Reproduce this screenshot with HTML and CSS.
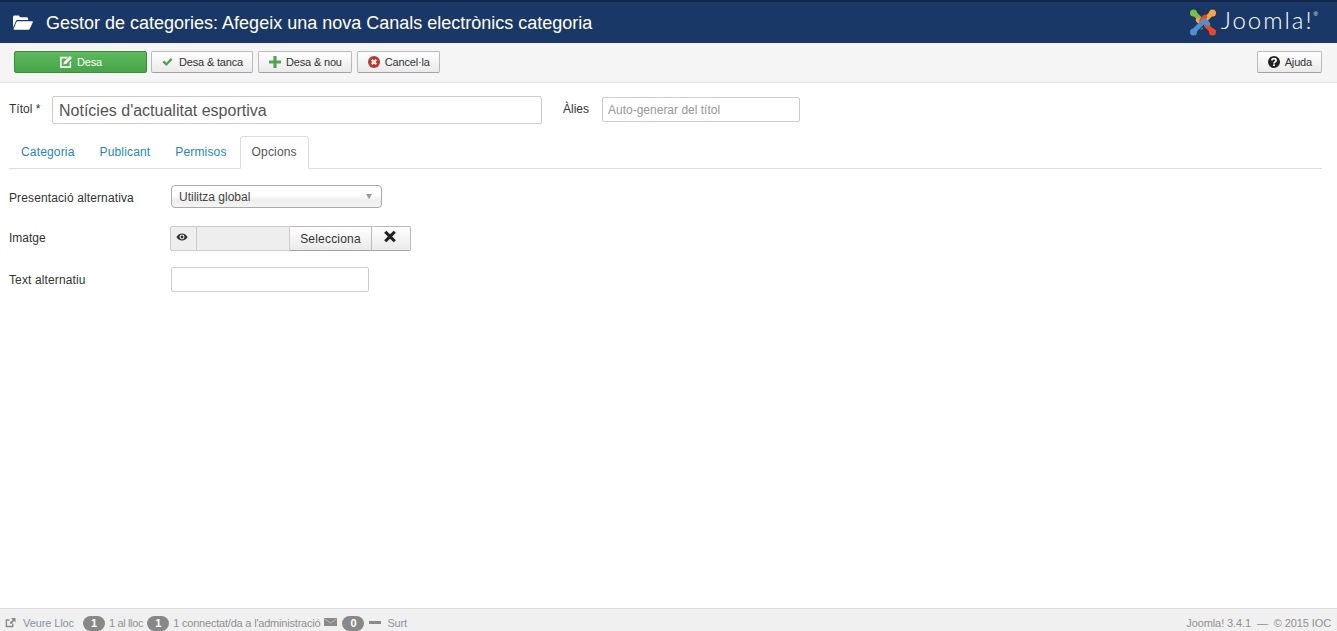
FILE: index.html
```html
<!DOCTYPE html>
<html lang="ca">
<head>
<meta charset="utf-8">
<title>Gestor de categories</title>
<link rel="stylesheet" href="styles.css">
</head>
<body>
<header class="header">
  <svg class="folder" viewBox="0 0 20 16" width="20" height="16"><path fill="#fff" d="M0 2.200C0 1.200.8.600 1.600.600h3.600c.9 0 1.500.6 1.600 1.600h6.800c.9 0 1.500.6 1.500 1.500v1.400H4.800c-1 0-1.700.5-2.100 1.300L0 12.500z"/><path fill="#fff" d="M4.600 6.200h14.600c.6 0 .9.500.6 1l-3 6.600c-.3.600-.8.900-1.400.9H1.200c-.6 0-.9-.5-.6-1l2.800-6.600c.2-.6.700-.9 1.200-.9z"/></svg>
  <h1 class="title">Gestor de categories: Afegeix una nova Canals electrònics categoria</h1>
  <div class="logo">
    <svg viewBox="0 0 28 28" width="28" height="28">
      <g fill="none" stroke-width="4.600" stroke-linecap="round" stroke-linejoin="round">
        <path stroke="#7ac143" d="M5 5L15.500 15.500 12 19"/>
        <path stroke="#1a3867" stroke-width="5.600" d="M18 9.500L12 15.500"/>
        <path stroke="#f9a541" d="M23 5L12.500 15.500 9 12"/>
        <path stroke="#1a3867" stroke-width="5.600" d="M15.500 17.500L18.500 20.500"/>
        <path stroke="#f44321" d="M23 23L12.500 12.500 16 9"/>
        <path stroke="#1a3867" stroke-width="5.600" d="M12 17L8.500 20.500"/>
        <path stroke="#5091cd" d="M5 23L15.500 12.500 19 16"/>
      </g>
      <circle cx="4.500" cy="5" r="3.500" fill="#7ac143"/>
      <circle cx="23.500" cy="5" r="3.500" fill="#f9a541"/>
      <circle cx="23.500" cy="24" r="3.500" fill="#f44321"/>
      <circle cx="4.500" cy="24" r="3.500" fill="#5091cd"/>
    </svg>
    <span class="logo-text">Joomla!</span><span class="logo-reg">®</span>
  </div>
</header>

<nav class="toolbar">
  <button class="btn btn-save">
    <svg class="ico" viewBox="0 0 14 14" width="12" height="12"><path fill="#fff" d="M0 1h9.500L7.700 2.800H1.900v9.300h9.300V7.500L13 5.700V14H0z"/><path fill="#fff" d="M11.600 0L14 2.400 7 9.400l-3 .6.600-3z"/></svg>Desa
  </button>
  <button class="btn">
    <svg class="ico ico-check" viewBox="0 0 14 12" width="11" height="10"><path fill="#51a351" d="M.5 6.200l2.200-2.200 2.800 2.800L11.300 1l2.200 2.200L5.500 11z"/></svg>Desa &amp; tanca
  </button>
  <button class="btn">
    <svg class="ico" viewBox="0 0 12 12" width="12" height="12"><path fill="#51a351" d="M4.400 0h3.200v4.400H12v3.200H7.600V12H4.400V7.600H0V4.400h4.400z"/></svg>Desa &amp; nou
  </button>
  <button class="btn">
    <svg class="ico" viewBox="0 0 12 12" width="12" height="12"><circle cx="6" cy="6" r="6" fill="#bd362f"/><path stroke="#fff" stroke-width="2" d="M3.700 3.700l4.600 4.600M8.300 3.700l-4.600 4.600"/></svg>Cancel·la
  </button>
  <button class="btn btn-help">
    <svg class="ico" viewBox="0 0 12 12" width="12" height="12"><circle cx="6" cy="6" r="6" fill="#222"/><path fill="none" stroke="#fff" stroke-width="1.700" d="M3.900 4.600c0-2.600 4.200-2.600 4.200-.2 0 1.500-2.100 1.400-2.100 3"/><rect x="5.100" y="8.300" width="1.800" height="1.700" fill="#fff"/></svg>Ajuda
  </button>
</nav>

<main class="content">
  <div class="title-row">
    <label class="lbl-title">Títol *</label>
    <input class="input-title" type="text" value="Notícies d'actualitat esportiva">
    <label class="lbl-alias">Àlies</label>
    <input class="input-alias" type="text" placeholder="Auto-generar del títol">
  </div>

  <ul class="tabs">
    <li class="tab">Categoria</li>
    <li class="tab">Publicant</li>
    <li class="tab">Permisos</li>
    <li class="tab tab-active">Opcions</li>
  </ul>

  <div class="form">
    <div class="row row-select">
      <label class="lbl">Presentació alternativa</label>
      <div class="select">Utilitza global<span class="caret"></span></div>
    </div>
    <div class="row row-media">
      <label class="lbl">Imatge</label>
      <div class="media">
        <span class="addon">
          <svg viewBox="0 0 14 10" width="12" height="8"><path fill="#333" d="M7 .5C3.800.5 1.400 2.500 0 5c1.400 2.500 3.800 4.500 7 4.500s5.600-2 7-4.500C12.600 2.500 10.200.5 7 .5zm0 7.600A3.100 3.100 0 1 1 7 1.900a3.100 3.100 0 0 1 0 6.200z"/><circle cx="7" cy="5" r="1.800" fill="#333"/></svg>
        </span>
        <span class="media-field"></span>
        <span class="media-btn media-select">Selecciona</span>
        <span class="media-btn media-clear">
          <svg viewBox="0 0 12 12" width="14" height="13"><path fill="#222" d="M2.600.6L6 4l3.400-3.400 2 2L8 6l3.400 3.400-2 2L6 8l-3.400 3.400-2-2L4 6 .6 2.600z"/></svg>
        </span>
      </div>
    </div>
    <div class="row">
      <label class="lbl">Text alternatiu</label>
      <input class="input-text" type="text">
    </div>
  </div>
</main>

<footer class="footer">
  <svg class="f-ico" viewBox="0 0 12 12" width="11" height="11"><path fill="none" stroke="#8a8a8a" stroke-width="1.500" d="M8.500 7v3.300H1.500V3.300H5"/><path fill="#8a8a8a" d="M6.500 1H11.500V6L9.900 4.400 6.500 7.800 5 6.300 8.400 2.900z"/></svg>
  <span class="f-link f-site">Veure Lloc</span>
  <span class="badge">1</span><span class="f-text f-short">1 al lloc</span>
  <span class="badge">1</span><span class="f-text">1 connectat/da a l'administració</span>
  <svg class="f-mail" viewBox="0 0 13 8" width="13" height="8"><rect width="13" height="8" fill="#8a8a8a"/><path d="M.5 1L6.500 5 12.500 1" fill="none" stroke="#c8c8c8" stroke-width=".8"/></svg>
  <span class="badge badge-zero">0</span>
  <span class="f-dash"></span>
  <span class="f-link">Surt</span>
  <span class="f-right">Joomla! 3.4.1 &nbsp;— &nbsp;© 2015 IOC</span>
</footer>
</body>
</html>
```
FILE: styles.css
```css
* { box-sizing: border-box; }
html, body { height: 100%; }
body {
  margin: 0;
  display: flex;
  flex-direction: column;
  height: 631px;
  overflow: hidden;
  background: #fff;
  font-family: "Liberation Sans", Arial, sans-serif;
  font-size: 12px;
  color: #333;
}
.header {
  height: 43px;
  flex: none;
  display: flex;
  align-items: center;
  background: #1a3867;
  border-top: 2px solid #14274a;
  padding-left: 13px;
  padding-right: 19px;
}
.folder { flex: none; margin-right: 13px; }
.title {
  margin: 0;
  font-size: 18px;
  font-weight: 400;
  color: #fff;
  flex: 1;
  padding-top: 1px;
}
.logo { display: flex; align-items: center; color: #fff; margin-top: -1px; }
.logo svg { margin-right: 4px; }
.logo-text { font-size: 24px; font-weight: 300; letter-spacing: 2px; font-family: "Lato", sans-serif; margin-top: -5px; }
.logo-reg { font-size: 6px; align-self: flex-start; margin-top: 3px; }
.toolbar {
  height: 40px;
  flex: none;
  display: flex;
  align-items: center;
  gap: 5px;
  background: #f5f5f5;
  border-bottom: 1px solid #e3e3e3;
  padding: 0 15px 1px 14px;
}
.btn {
  height: 22px;
  display: inline-flex;
  align-items: center;
  justify-content: center;
  padding: 0 9px 0 10px;
  font: 11px "Liberation Sans", Arial, sans-serif;
  letter-spacing: -.17px;
  color: #333;
  background: linear-gradient(#fff, #eaeaea);
  border: 1px solid #bbb;
  border-bottom-color: #a2a2a2;
  border-radius: 2px;
}
.ico { margin-right: 5px; flex: none; }
.ico-check { margin-right: 6px; }
.btn-save {
  width: 133px;
  margin-right: -1px;
  color: #fff;
  background: linear-gradient(#5eb95e, #46a546);
  border-color: #3d8c3d;
}
.btn-help { margin-left: auto; }
.content { flex: 1; padding: 13px 15px 0 9px; }
.title-row { display: flex; align-items: center; height: 28px; }
.lbl-title { width: 43px; margin-top: -2px; }
.input-title {
  width: 490px;
  height: 28px;
  padding: 2px 6px 0;
  font: 16px "Liberation Sans", Arial, sans-serif;
  color: #555;
  border: 1px solid #ccc;
  border-radius: 2px;
  outline: 0;
}
.lbl-alias { margin-left: 21px; width: 39px; margin-top: -3px; }
.input-alias {
  width: 198px;
  height: 25px;
  align-self: flex-start;
  margin-top: 1px;
  padding: 0 5px;
  font: 12px "Liberation Sans", Arial, sans-serif;
  border: 1px solid #ccc;
  border-radius: 2px;
}
.input-alias::placeholder { color: #999; opacity: 1; }
.tabs {
  list-style: none;
  margin: 12px 0 0;
  padding: 0;
  display: flex;
  height: 33px;
  border-bottom: 1px solid #ddd;
  letter-spacing: .16px;
}
.tab {
  height: 33px;
  padding: 8px 11px 0;
  color: #2384d3;
  border: 1px solid transparent;
  margin-right: 1px;
}
.tab-active {
  color: #555;
  background: #fff;
  border-color: #ddd #ddd #fff;
  border-radius: 3px 3px 0 0;
}
.form { padding-top: 16px; }
.row { display: flex; align-items: center; height: 25px; margin-bottom: 16px; }
.row-select { height: 23px; margin-bottom: 18px; }
.lbl { width: 162px; letter-spacing: .12px; }
.row-select .lbl { padding-top: 2px; }
.row-media .lbl { width: 161px; margin-top: -2px; letter-spacing: 0; }
.select {
  position: relative;
  width: 211px;
  height: 23px;
  line-height: 22px;
  padding-left: 7px;
  color: #444;
  background: linear-gradient(#fff 40%, #eee 70%, #f4f4f4);
  border: 1px solid #aaa;
  border-radius: 4px;
}
.caret {
  position: absolute;
  right: 9px;
  top: 8px;
  border: 3.500px solid transparent;
  border-top: 5px solid #999;
  border-bottom: 0;
}
.media { display: flex; height: 25px; }
.addon {
  width: 27px;
  display: flex;
  justify-content: center;
  padding: 6px 3px 0 0;
  background: #eee;
  border: 1px solid #ccc;
  border-radius: 2px 0 0 2px;
}
.addon svg { display: block; }
.media-field {
  width: 93px;
  background: #eee;
  border: 1px solid #ccc;
  border-left: 0;
}
.media-btn {
  display: flex;
  align-items: center;
  justify-content: center;
  background: linear-gradient(#fff, #eaeaea);
  border: 1px solid #bbb;
  border-left: 0;
  border-bottom-color: #a2a2a2;
}
.media-select { width: 82px; color: #333; font-size: 12px; letter-spacing: .2px; }
.media-clear { width: 39px; border-radius: 0 2px 2px 0; padding: 0 3px 4px 0; }
.input-text {
  width: 198px;
  height: 25px;
  border: 1px solid #ccc;
  border-radius: 2px;
}
.footer {
  height: 23px;
  flex: none;
  display: flex;
  align-items: center;
  padding: 6px 6px 0 5px;
  background: #f0f0f0;
  border-top: 1px solid #ddd;
  font-size: 11px;
  letter-spacing: -.2px;
  color: #909090;
}
.f-ico { margin-right: 7px; margin-top: -2px; }
.f-link { color: #8a93a0; }
.f-site { margin-right: 9px; letter-spacing: -.1px; }
.badge {
  width: 22px;
  height: 15px;
  line-height: 15px;
  margin-right: 4px;
  text-align: center;
  font-weight: 700;
  color: #fff;
  background: #888;
  border-radius: 8px;
}
.f-text { margin-right: 4px; }
.f-short { letter-spacing: -.35px; }
.f-mail { margin-right: 5px; margin-top: -2px; }
.badge-zero { margin-right: 5px; }
.f-dash { width: 12px; height: 3px; background: #8a8a8a; margin-right: 6px; margin-top: -2px; }
.f-right { margin-left: auto; letter-spacing: -.1px; }
```
